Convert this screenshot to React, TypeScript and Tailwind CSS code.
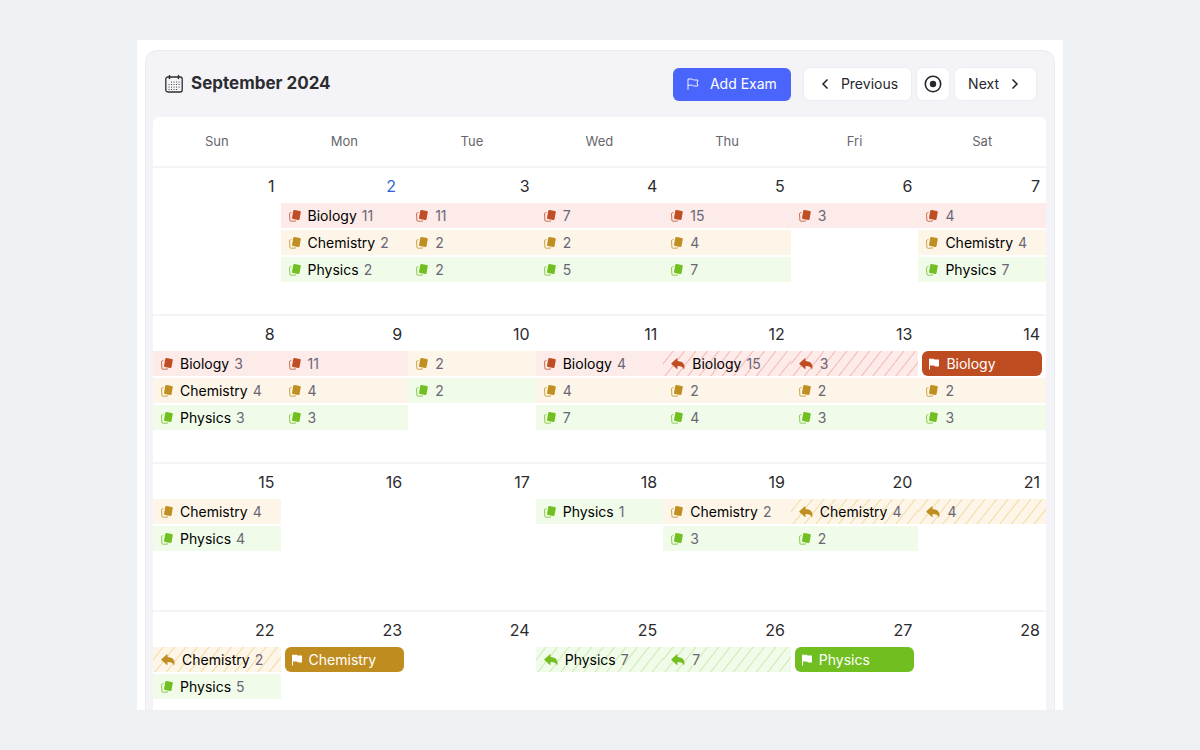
import clsx from "clsx";
import { ChevronLeft, ChevronRight } from "lucide-react";

type Subject = "Biology" | "Chemistry" | "Physics";
type EventKind = "study" | "review" | "exam";

type DayEvent = {
  subject: Subject;
  kind: EventKind;
  count?: number;
  label?: boolean;
};

type Day = {
  date: number;
  today?: boolean;
  events: DayEvent[];
};

const study = (subject: Subject, count: number, label = false): DayEvent => ({
  subject,
  kind: "study",
  count,
  label,
});

const review = (subject: Subject, count: number, label = false): DayEvent => ({
  subject,
  kind: "review",
  count,
  label,
});

const exam = (subject: Subject): DayEvent => ({
  subject,
  kind: "exam",
  label: true,
});

const weekdays = ["Sun", "Mon", "Tue", "Wed", "Thu", "Fri", "Sat"];

const weeks: Day[][] = [
  [
    { date: 1, events: [] },
    {
      date: 2,
      today: true,
      events: [
        study("Biology", 11, true),
        study("Chemistry", 2, true),
        study("Physics", 2, true),
      ],
    },
    {
      date: 3,
      events: [study("Biology", 11), study("Chemistry", 2), study("Physics", 2)],
    },
    {
      date: 4,
      events: [study("Biology", 7), study("Chemistry", 2), study("Physics", 5)],
    },
    {
      date: 5,
      events: [study("Biology", 15), study("Chemistry", 4), study("Physics", 7)],
    },
    { date: 6, events: [study("Biology", 3)] },
    {
      date: 7,
      events: [
        study("Biology", 4),
        study("Chemistry", 4, true),
        study("Physics", 7, true),
      ],
    },
  ],
  [
    {
      date: 8,
      events: [
        study("Biology", 3, true),
        study("Chemistry", 4, true),
        study("Physics", 3, true),
      ],
    },
    {
      date: 9,
      events: [study("Biology", 11), study("Chemistry", 4), study("Physics", 3)],
    },
    { date: 10, events: [study("Chemistry", 2), study("Physics", 2)] },
    {
      date: 11,
      events: [
        study("Biology", 4, true),
        study("Chemistry", 4),
        study("Physics", 7),
      ],
    },
    {
      date: 12,
      events: [
        review("Biology", 15, true),
        study("Chemistry", 2),
        study("Physics", 4),
      ],
    },
    {
      date: 13,
      events: [review("Biology", 3), study("Chemistry", 2), study("Physics", 3)],
    },
    {
      date: 14,
      events: [exam("Biology"), study("Chemistry", 2), study("Physics", 3)],
    },
  ],
  [
    {
      date: 15,
      events: [study("Chemistry", 4, true), study("Physics", 4, true)],
    },
    { date: 16, events: [] },
    { date: 17, events: [] },
    { date: 18, events: [study("Physics", 1, true)] },
    { date: 19, events: [study("Chemistry", 2, true), study("Physics", 3)] },
    { date: 20, events: [review("Chemistry", 4, true), study("Physics", 2)] },
    { date: 21, events: [review("Chemistry", 4)] },
  ],
  [
    {
      date: 22,
      events: [review("Chemistry", 2, true), study("Physics", 5, true)],
    },
    { date: 23, events: [exam("Chemistry")] },
    { date: 24, events: [] },
    { date: 25, events: [review("Physics", 7, true)] },
    { date: 26, events: [review("Physics", 7)] },
    { date: 27, events: [exam("Physics")] },
    { date: 28, events: [] },
  ],
];

const iconColor: Record<Subject, string> = {
  Biology: "text-[#c04e24]",
  Chemistry: "text-[#c08f22]",
  Physics: "text-[#72bf22]",
};

const tint: Record<Subject, string> = {
  Biology: "bg-[#fcebe9]",
  Chemistry: "bg-[#fdf5e8]",
  Physics: "bg-[#f0fce9]",
};

const solid: Record<Subject, string> = {
  Biology: "bg-[#bd4c20]",
  Chemistry: "bg-[#bf8d1f]",
  Physics: "bg-[#70be20]",
};

const stripes: Record<Subject, string> = {
  Biology:
    "bg-[repeating-linear-gradient(128deg,transparent_0px,transparent_7px,#f3b9b3_8px,transparent_9px)]",
  Chemistry:
    "bg-[repeating-linear-gradient(128deg,transparent_0px,transparent_7px,#f1dca2_8px,transparent_9px)]",
  Physics:
    "bg-[repeating-linear-gradient(128deg,transparent_0px,transparent_7px,#cfeab2_8px,transparent_9px)]",
};

function CardsIcon({ className }: { className?: string }) {
  return (
    <svg viewBox="0 0 12 12" className={className} aria-hidden="true">
      <rect
        x="3.6"
        y="0.5"
        width="7.6"
        height="9"
        rx="1.2"
        transform="rotate(10 7.4 5)"
        fill="currentColor"
      />
      <path
        d="M2.1 2.6 1.4 2.8C0.8 2.9 0.5 3.3 0.5 3.9L0.9 10.2C1 10.9 1.4 11.3 2.1 11.3L6.6 11"
        fill="none"
        stroke="currentColor"
        strokeOpacity="0.8"
        strokeWidth="1"
        strokeLinecap="round"
      />
    </svg>
  );
}

function ReplyIcon({ className }: { className?: string }) {
  return (
    <svg viewBox="0 0 14 12" className={className} aria-hidden="true">
      <path
        d="M0.4 5.2 5.6 0.4C6 0.1 6.5 0.3 6.5 0.8V3.1C10.6 3.2 13.5 5.2 13.5 9.2C13.5 10.2 13.3 11 12.9 11.7C12.6 9.4 10.6 8.1 6.5 8.1V10.4C6.5 10.9 6 11.1 5.6 10.8L0.4 6C0.1 5.7 0.1 5.5 0.4 5.2Z"
        fill="currentColor"
      />
    </svg>
  );
}

function FlagIcon({ className }: { className?: string }) {
  return (
    <svg viewBox="0 0 12 12" className={className} aria-hidden="true">
      <path
        d="M1 0.8H5.6C6.2 0.8 6.4 1.6 7 1.6H11V8.4H7.4C6.6 8.4 6.4 7.6 5.6 7.6H2V11.6H1Z"
        fill="currentColor"
      />
    </svg>
  );
}

function FlagOutlineIcon({ className }: { className?: string }) {
  return (
    <svg viewBox="0 0 12 12" className={className} aria-hidden="true">
      <path
        d="M1 11.5V1H5.4L6.4 2H11L10 4.9L11 8H6.4L5.4 7.2H1"
        fill="none"
        stroke="currentColor"
        strokeWidth="0.9"
        strokeLinejoin="round"
        strokeLinecap="round"
      />
    </svg>
  );
}

function CalendarIcon({ className }: { className?: string }) {
  return (
    <svg viewBox="0 0 18 18" className={className} aria-hidden="true">
      <g fill="none" stroke="currentColor" strokeLinecap="round">
        <rect x="0.8" y="2" width="16.4" height="15" rx="2" strokeWidth="1.3" />
        <path d="M4.5 0.7V3.6M13.5 0.7V3.6" strokeWidth="1.5" />
        <path
          d="M6.5 7H14.1M4 9.5H14.1M4 12H14.1M4 14.5H11.6"
          strokeWidth="1.2"
          strokeDasharray="0.01 2.5"
        />
      </g>
    </svg>
  );
}

function TodayIcon({ className }: { className?: string }) {
  return (
    <svg viewBox="0 0 18 18" className={className} aria-hidden="true">
      <circle
        cx="9"
        cy="9"
        r="7.7"
        fill="none"
        stroke="currentColor"
        strokeWidth="1.6"
      />
      <circle cx="9" cy="9" r="3.2" fill="currentColor" />
    </svg>
  );
}

function EventBar({ event }: { event: DayEvent }) {
  if (event.kind === "exam") {
    return (
      <li
        className={clsx(
          "mx-1 flex h-[25px] items-center gap-[6px] rounded-md px-[6px] text-white",
          solid[event.subject]
        )}
      >
        <FlagIcon className="h-3 w-3" />
        {event.subject}
      </li>
    );
  }

  return (
    <li
      className={clsx(
        "flex h-[25px] items-center gap-[7px] pl-2",
        tint[event.subject],
        event.kind === "review" && stripes[event.subject]
      )}
    >
      {event.kind === "review" ? (
        <ReplyIcon className={clsx("h-3 w-[14px]", iconColor[event.subject])} />
      ) : (
        <CardsIcon className={clsx("h-3 w-3", iconColor[event.subject])} />
      )}
      <span className="flex gap-[5px] text-[#6b6675]">
        {event.label && <span className="text-black">{event.subject}</span>}
        <span>{event.count}</span>
      </span>
    </li>
  );
}

function DayCell({ day }: { day: Day }) {
  return (
    <td className="h-[148px] border-t-2 border-[#f4f4f6] p-0 align-top">
      <p
        className={clsx(
          "pt-[6px] text-right text-base",
          day.today ? "pr-3 text-[#2f62d9]" : "pr-[6px] text-[#2b2b2f]"
        )}
      >
        {day.date}
      </p>
      <ul className="mt-[5px] flex flex-col gap-[2px] text-sm">
        {day.events.map((event) => (
          <EventBar key={event.subject} event={event} />
        ))}
      </ul>
    </td>
  );
}

const navButton =
  "flex h-8 cursor-pointer items-center rounded-md bg-white shadow-[0_0_1px_1px_#ececf1]";

export default function App() {
  return (
    <div className="h-screen bg-[#edf1f4] px-[137px] py-10 font-['Inter',sans-serif]">
      <main className="h-full overflow-hidden bg-white px-2 pt-[10px]">
        <section className="rounded-t-xl border border-[#ebebef] bg-[#f4f4f8] pr-2 pl-[7px]">
          <header className="flex h-[66px] items-center justify-between pr-[10px] pl-3">
            <h1 className="flex items-center gap-2 text-[17px] font-bold text-[#2c2c31]">
              <CalendarIcon className="h-[18px] w-[18px]" />
              September 2024
            </h1>
            <div className="flex items-center gap-[6px] text-sm text-[#26262b]">
              <button
                type="button"
                className="mr-[7px] flex h-[33px] cursor-pointer items-center gap-[11px] rounded-md bg-[#4965fb] px-[14px] text-white"
              >
                <FlagOutlineIcon className="h-3 w-3" />
                Add Exam
              </button>
              <button type="button" className={clsx(navButton, "gap-2 px-[13px]")}>
                <ChevronLeft className="h-4 w-4" strokeWidth={2.5} />
                Previous
              </button>
              <button
                type="button"
                aria-label="Today"
                className={clsx(navButton, "px-[7px]")}
              >
                <TodayIcon className="h-[18px] w-[18px]" />
              </button>
              <button type="button" className={clsx(navButton, "gap-2 px-[13px]")}>
                Next
                <ChevronRight className="h-4 w-4" strokeWidth={2.5} />
              </button>
            </div>
          </header>
          <table className="w-full table-fixed border-separate border-spacing-0 rounded-t-md bg-white">
            <thead>
              <tr>
                {weekdays.map((weekday) => (
                  <th
                    key={weekday}
                    scope="col"
                    className="h-[49px] p-0 text-[13px] font-normal text-[#66666e]"
                  >
                    {weekday}
                  </th>
                ))}
              </tr>
            </thead>
            <tbody>
              {weeks.map((week) => (
                <tr key={week[0].date}>
                  {week.map((day) => (
                    <DayCell key={day.date} day={day} />
                  ))}
                </tr>
              ))}
            </tbody>
          </table>
        </section>
      </main>
    </div>
  );
}
